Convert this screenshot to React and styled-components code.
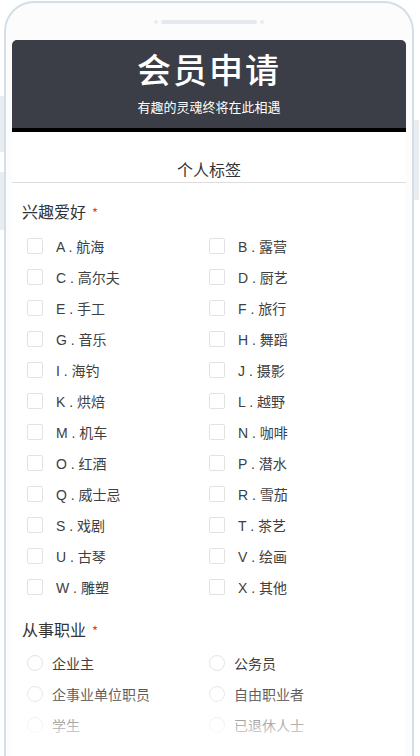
import styled, { createGlobalStyle } from "styled-components";

const hobbies = [
    ["A", "航海"], ["B", "露营"], ["C", "高尔夫"], ["D", "厨艺"],
    ["E", "手工"], ["F", "旅行"], ["G", "音乐"], ["H", "舞蹈"],
    ["I", "海钓"], ["J", "摄影"], ["K", "烘焙"], ["L", "越野"],
    ["M", "机车"], ["N", "咖啡"], ["O", "红酒"], ["P", "潜水"],
    ["Q", "威士忌"], ["R", "雪茄"], ["S", "戏剧"], ["T", "茶艺"],
    ["U", "古琴"], ["V", "绘画"], ["W", "雕塑"], ["X", "其他"],
];

const jobs = ["企业主", "公务员", "企事业单位职员", "自由职业者", "学生", "已退休人士"];

function App() {
    return (
        <>
            <GlobalStyle />
            <Page>
                <SideButton $top={96} $height={56} />
                <SideButton $top={172} $height={58} />
                <PowerButton />
                <Phone>
                    <Notch>
                        <Dot />
                        <Speaker />
                        <Dot />
                    </Notch>
                    <Header>
                        <Title>会员申请</Title>
                        <Subtitle>有趣的灵魂终将在此相遇</Subtitle>
                    </Header>
                    <Content>
                        <SectionTitle>个人标签</SectionTitle>
                        <FieldLabel>
                            兴趣爱好<Required>*</Required>
                        </FieldLabel>
                        <OptionGrid>
                            {hobbies.map(([letter, name]) => (
                                <Option key={letter}>
                                    <CheckBox />
                                    <CheckText>
                                        {letter} . {name}
                                    </CheckText>
                                </Option>
                            ))}
                        </OptionGrid>
                        <FieldLabel $top={17}>
                            从事职业<Required>*</Required>
                        </FieldLabel>
                        <OptionGrid $top={6}>
                            {jobs.map((job) => (
                                <Option key={job}>
                                    <Radio />
                                    <RadioText>{job}</RadioText>
                                </Option>
                            ))}
                        </OptionGrid>
                        <Fade />
                    </Content>
                </Phone>
            </Page>
        </>
    );
}

const GlobalStyle = createGlobalStyle`
    html, body {
        margin: 0;
        padding: 0;
        background: #ffffff;
        overflow: hidden;
    }
    body {
        font-family: "Liberation Sans", "Noto Sans CJK SC", sans-serif;
    }
`;

const Page = styled.div`
    position: relative;
    width: 420px;
    height: 756px;
    overflow: hidden;
`;

const SideButton = styled.div`
    position: absolute;
    left: 0;
    top: ${(props) => props.$top}px;
    width: 6px;
    height: ${(props) => props.$height}px;
    background: #e8edf1;
    border-radius: 0 3px 3px 0;
`;

const PowerButton = styled.div`
    position: absolute;
    right: 1px;
    top: 120px;
    width: 6px;
    height: 80px;
    background: #e8edf1;
    border-radius: 3px 0 0 3px;
`;

const Phone = styled.div`
    position: relative;
    margin: 1px 6px 0 4px;
    height: 760px;
    box-sizing: border-box;
    border: 2px solid #d2dfe7;
    border-bottom: none;
    border-radius: 30px 30px 0 0;
    background: #fcfcfc;
    padding: 0 6px;
`;

const Notch = styled.div`
    display: flex;
    align-items: center;
    justify-content: center;
    gap: 3px;
    height: 37px;
`;

const Dot = styled.div`
    width: 4px;
    height: 4px;
    border-radius: 50%;
    background: #e6ecf0;
`;

const Speaker = styled.div`
    width: 96px;
    height: 4px;
    border-radius: 2px;
    background: #e3e9ee;
`;

const Header = styled.div`
    display: flex;
    flex-direction: column;
    align-items: center;
    height: 88px;
    background: #3b3e46;
    border-bottom: 4px solid #000;
    border-radius: 5px 5px 0 0;
    color: #fff;
    font-family: "Noto Sans CJK SC", sans-serif;
`;

const Title = styled.div`
    margin-top: 9px;
    font-size: 34px;
    line-height: 40px;
    font-weight: 500;
    letter-spacing: 2px;
`;

const Subtitle = styled.div`
    margin-top: 10px;
    font-size: 13px;
    line-height: 16px;
`;

const Content = styled.div`
    position: relative;
    background: #ffffff;
    height: 640px;
`;

const SectionTitle = styled.div`
    padding-top: 27px;
    height: 23px;
    line-height: 20px;
    text-align: center;
    font-family: "Noto Sans CJK SC", sans-serif;
    font-size: 16px;
    color: #333;
    border-bottom: 1px solid #dcdcdc;
`;

const FieldLabel = styled.div`
    margin-top: ${(props) => props.$top ?? 18}px;
    padding-left: 10px;
    line-height: 20px;
    font-family: "Noto Sans CJK SC", sans-serif;
    font-size: 16px;
    color: #333;
`;

const Required = styled.span`
    margin-left: 6px;
    color: #e23b3b;
    font-size: 13px;
`;

const OptionGrid = styled.div`
    display: grid;
    grid-template-columns: 182px 182px;
    grid-auto-rows: 31px;
    margin-top: ${(props) => props.$top ?? 7}px;
    padding-left: 15px;
`;

const Option = styled.div`
    display: flex;
    align-items: center;
`;

const CheckBox = styled.span`
    width: 16px;
    height: 16px;
    box-sizing: border-box;
    border: 1px solid #e2e2e2;
    border-radius: 2px;
    background: #fff;
    flex-shrink: 0;
`;

const CheckText = styled.span`
    margin-left: 13px;
    font-size: 14px;
    color: #404040;
    font-family: "Liberation Sans", "Noto Sans CJK SC", sans-serif;
`;

const Radio = styled.span`
    width: 16px;
    height: 16px;
    box-sizing: border-box;
    border: 1px solid #e4e4e4;
    border-radius: 50%;
    background: #fff;
    flex-shrink: 0;
`;

const RadioText = styled.span`
    margin-left: 9px;
    font-size: 14px;
    color: #404040;
    font-family: "Noto Sans CJK SC", sans-serif;
`;

const Fade = styled.div`
    position: absolute;
    left: 0;
    right: 0;
    top: 548px;
    height: 92px;
    background: linear-gradient(
        to bottom,
        rgba(255, 255, 255, 0) 0%,
        rgba(255, 255, 255, 0.45) 40%,
        rgba(255, 255, 255, 0.85) 65%,
        #ffffff 80%
    );
`;

export default App;
